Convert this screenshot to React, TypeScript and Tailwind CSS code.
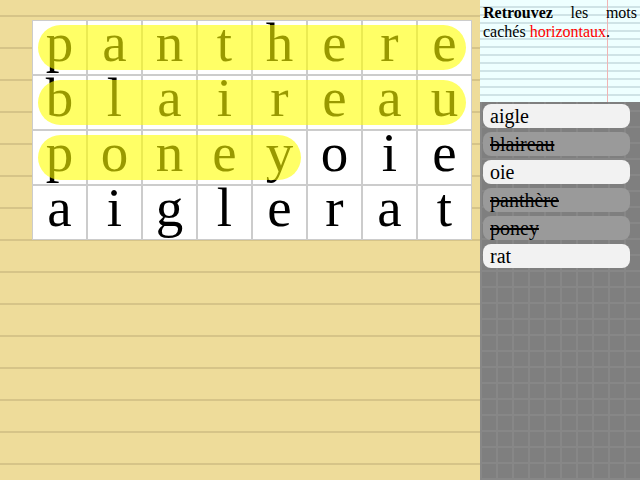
import React from 'react';

const grid = ['panthere', 'blaireau', 'poneyoie', 'aiglerat'];

const words = [
  { w: 'aigle', found: false },
  { w: 'blaireau', found: true },
  { w: 'oie', found: false },
  { w: 'panthère', found: true },
  { w: 'poney', found: true },
  { w: 'rat', found: false },
];

// found words, as [row, first col, length]
const marks = [
  [0, 0, 8],
  [1, 0, 8],
  [2, 0, 5],
];

export default function App() {
  return (
    <div className="flex h-[480px] w-[640px] overflow-hidden font-['Liberation_Serif',serif]">
      <main className="h-full w-[480px] bg-[image:repeating-linear-gradient(to_bottom,#eedc9a_0px,#eedc9a_15px,#d6c488_15px,#d6c488_17px,#eedc9a_17px,#eedc9a_32px)] pl-8 pt-5">
        <div className="relative w-[440px]">
          {grid.map((row, r) => (
            <div key={r} className="flex">
              {row.split('').map((ch, c) => (
                <div
                  key={c}
                  className="h-[55px] w-[55px] border border-[#cccccc] bg-white text-center text-[55px] leading-[43px] text-black"
                >
                  {ch}
                </div>
              ))}
            </div>
          ))}
          {marks.map(([r, c, n], i) => (
            <div
              key={i}
              className="absolute h-[45px] rounded-full bg-[#ffff00]/60"
              style={{ top: r * 55 + 5, left: c * 55 + 6, width: n * 55 - 12 }}
            />
          ))}
        </div>
      </main>

      <aside className="flex h-full w-[160px] flex-col">
        <div className="relative h-[102px] bg-[#eeffff] bg-[image:repeating-linear-gradient(to_bottom,transparent_0px,transparent_6px,#cfe3e6_6px,#cfe3e6_8px)] px-[3px] pt-[3px] text-justify text-base leading-[19px] text-black">
          <div className="absolute bottom-0 left-[127px] top-0 w-px bg-[#f0b4b4]" />
          <p className="relative [text-align-last:left]">
            <b>Retrouvez</b> les mots cachés <span className="text-[#ff0000]">horizontaux</span>.
          </p>
        </div>
        <div className="flex flex-1 flex-col gap-1 bg-[#7f7f7f] bg-[image:linear-gradient(to_right,#878787_2px,transparent_2px),linear-gradient(to_bottom,#878787_2px,transparent_2px)] bg-[size:16px_16px] bg-[position:0px_8px] pl-[3px] pr-[10px] pt-[2px]">
          {words.map((it) => (
            <div
              key={it.w}
              className={
                it.found
                  ? 'h-6 rounded-lg bg-[#9a9a9a] pl-[7px] text-xl leading-6 text-black line-through'
                  : 'h-6 rounded-lg bg-[#f2f2f2] pl-[7px] text-xl leading-6 text-black'
              }
            >
              {it.w}
            </div>
          ))}
        </div>
      </aside>
    </div>
  );
}
